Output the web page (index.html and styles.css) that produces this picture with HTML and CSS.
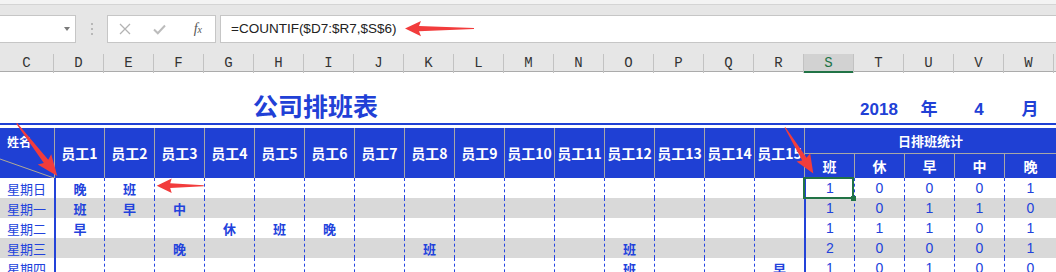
FILE: index.html
```html
<!DOCTYPE html>
<html lang="zh-CN">
<head>
    <meta charset="UTF-8">
    <meta name="viewport" content="width=device-width, initial-scale=1.0">
    <title>公司排班表</title>
    <link rel="stylesheet" href="styles.css">
</head>
<body>
    <div class="ribbon-edge"></div>

    <div class="formula-bar">
        <div class="name-box"><span class="drop"></span></div>
        <div class="grip"><i></i><i></i><i></i></div>
        <div class="fx-box">
            <span class="fx-btn">
                <svg width="12" height="12" viewBox="0 0 12 12"><path d="M1 1L11 11M11 1L1 11" stroke="#b3b3b3" stroke-width="1.3"/></svg>
            </span>
            <span class="fx-btn">
                <svg width="13" height="11" viewBox="0 0 13 11"><path d="M1 5.5L4.8 9.3L12 1.5" fill="none" stroke="#bcbcbc" stroke-width="2"/></svg>
            </span>
            <span class="fx-btn fx">f<sub>x</sub></span>
        </div>
        <div class="formula">=COUNTIF($D7:$R7,$S$6)</div>
    </div>

    <div class="col-heads">
        <div>C</div><div>D</div><div>E</div><div>F</div><div>G</div><div>H</div><div>I</div>
        <div>J</div><div>K</div><div>L</div><div>M</div><div>N</div><div>O</div><div>P</div>
        <div>Q</div><div>R</div><div class="active">S</div><div>T</div><div>U</div><div>V</div><div>W</div>
    </div>

    <div class="sheet">
        <div class="title-row">
            <div class="title">公司排班表</div>
            <div class="date first">2018</div>
            <div class="date">年</div>
            <div class="date">4</div>
            <div class="date">月</div>
        </div>
        <div class="rule"></div>

        <div class="head">
            <div class="corner">
                <span>姓名</span>
                <svg class="diag" width="54" height="50"><line x1="0" y1="31" x2="54" y2="50" stroke="#b4ab93" stroke-width="1"/></svg>
            </div>
            <div class="emp">员工1</div><div class="emp">员工2</div><div class="emp">员工3</div>
            <div class="emp">员工4</div><div class="emp">员工5</div><div class="emp">员工6</div>
            <div class="emp">员工7</div><div class="emp">员工8</div><div class="emp">员工9</div>
            <div class="emp">员工10</div><div class="emp">员工11</div><div class="emp">员工12</div>
            <div class="emp">员工13</div><div class="emp">员工14</div><div class="emp">员工15</div>
            <div class="stat-title">日排班统计</div>
            <div class="stat">班</div><div class="stat">休</div><div class="stat">早</div>
            <div class="stat">中</div><div class="stat">晚</div>
        </div>

        <div class="row">
            <div class="day">星期日</div>
            <div class="edge">晚</div><div>班</div><div></div><div></div><div></div><div></div><div></div><div></div>
            <div></div><div></div><div></div><div></div><div></div><div></div><div></div>
            <div class="edge n sel">1</div><div class="n">0</div><div class="n">0</div><div class="n">0</div><div class="n">1</div>
        </div>
        <div class="row alt">
            <div class="day">星期一</div>
            <div class="edge">班</div><div>早</div><div>中</div><div></div><div></div><div></div><div></div><div></div>
            <div></div><div></div><div></div><div></div><div></div><div></div><div></div>
            <div class="edge n">1</div><div class="n">0</div><div class="n">1</div><div class="n">1</div><div class="n">0</div>
        </div>
        <div class="row">
            <div class="day">星期二</div>
            <div class="edge">早</div><div></div><div></div><div>休</div><div>班</div><div>晚</div><div></div><div></div>
            <div></div><div></div><div></div><div></div><div></div><div></div><div></div>
            <div class="edge n">1</div><div class="n">1</div><div class="n">1</div><div class="n">0</div><div class="n">1</div>
        </div>
        <div class="row alt">
            <div class="day">星期三</div>
            <div class="edge"></div><div></div><div>晚</div><div></div><div></div><div></div><div></div><div>班</div>
            <div></div><div></div><div></div><div>班</div><div></div><div></div><div></div>
            <div class="edge n">2</div><div class="n">0</div><div class="n">0</div><div class="n">0</div><div class="n">1</div>
        </div>
        <div class="row">
            <div class="day">星期四</div>
            <div class="edge"></div><div></div><div></div><div></div><div></div><div></div><div></div><div></div>
            <div></div><div></div><div></div><div>班</div><div></div><div></div><div>早</div>
            <div class="edge n">1</div><div class="n">0</div><div class="n">1</div><div class="n">0</div><div class="n">0</div>
        </div>
    </div>

    <!-- red callout arrows drawn over the sheet -->
    <svg class="arrows" width="1056" height="272">
        <g fill="#f23c3c">
            <polygon transform="translate(405 28.6)" points="0,0 16,-7.6 14,-2.6 69,-0.5 69,0.5 14,2.6 16,7.6"/>
            <polygon transform="translate(156.7 185.7)" points="0,0 15,-7.2 13.5,-2.4 47,-0.5 47,0.5 13.5,2.4 15,7.2"/>
            <polygon transform="translate(57.3 176) rotate(-127.6)" points="0,0 21,-8.5 18.5,-2.8 66.5,-0.6 66.5,0.6 18.5,2.8 21,8.5"/>
            <polygon transform="translate(813.3 173.5) rotate(-121.6)" points="0,0 19,-8 17,-2.6 54,-0.5 54,0.5 17,2.6 19,8"/>
        </g>
    </svg>
</body>
</html>
```

FILE: styles.css
```css
body {
    margin: 0;
    width: 1056px;
    height: 272px;
    overflow: hidden;
    position: relative;
    background-color: #fff;
    font-family: "Noto Sans CJK SC", sans-serif;
}

/* excel chrome */
.ribbon-edge {
    height: 4px;
    background-color: #f3f3f3;
    border-bottom: 1px solid #d4d4d4;
}
.formula-bar {
    display: flex;
    align-items: flex-start;
    height: 49px;
    box-sizing: border-box;
    padding-top: 10px;
    background-color: #e6e6e6;
}
.name-box {
    width: 77px;
    height: 28px;
    margin-left: -1px;
    box-sizing: border-box;
    display: flex;
    align-items: center;
    justify-content: flex-end;
    padding-right: 5px;
    background-color: #fff;
    border: 1px solid #c6c6c6;
}
.drop {
    width: 0;
    height: 0;
    border-left: 3px solid transparent;
    border-right: 3px solid transparent;
    border-top: 4px solid #7a7a7a;
    margin-top: -1px;
}
.grip {
    width: 31px;
    height: 28px;
    display: flex;
    flex-direction: column;
    align-items: center;
    justify-content: center;
    gap: 3px;
}
.grip i {
    width: 2px;
    height: 2px;
    background-color: #b8b8b8;
}
.fx-box {
    width: 109px;
    height: 28px;
    box-sizing: border-box;
    display: flex;
    background-color: #fff;
    border: 1px solid #c6c6c6;
}
.fx-btn {
    flex: 1;
    display: flex;
    align-items: center;
    justify-content: center;
}
.fx {
    font-family: "Liberation Serif", serif;
    font-style: italic;
    font-size: 14px;
    color: #555;
    padding-left: 4px;
}
.fx sub {
    font-size: 10px;
    vertical-align: -1px;
}
.formula {
    flex: 1;
    height: 28px;
    box-sizing: border-box;
    margin-left: 4px;
    padding-left: 10px;
    background-color: #fff;
    border: 1px solid #c6c6c6;
    border-right: none;
    font-family: "Liberation Sans", Arial, sans-serif;
    font-size: 13.5px;
    line-height: 26px;
    color: #222;
}

.col-heads {
    display: grid;
    grid-template-columns: 54px repeat(20, 50px);
    height: 17px;
    background-color: #e6e6e6;
    border-bottom: 1px solid #ababab;
}
.col-heads div {
    border-right: 1px solid #c2c2c2;
    text-align: center;
    font-family: "Liberation Mono", monospace;
    font-size: 14px;
    line-height: 19px;
    color: #333;
}
.col-heads .active {
    background-color: #d2d2d2;
    color: #217346;
    box-shadow: inset 0 -2px #217346;
}

/* sheet */
.title-row,
.head,
.row {
    display: grid;
    grid-template-columns: 54px repeat(19, 50px) 1fr;
}
.title-row {
    height: 51px;
    align-items: end;
    color: #2140d6;
    font-weight: bold;
}
.title {
    grid-column: 5 / 12;
    padding-left: 49px;
    font-size: 25px;
    line-height: 30px;
    margin-bottom: 3px;
    white-space: nowrap;
}
.date {
    text-align: center;
    font-family: "Liberation Sans", "Noto Sans CJK SC", sans-serif;
    font-size: 17px;
    line-height: 20px;
    margin-bottom: 3px;
}
.date.first {
    grid-column-start: 18;
}
.rule {
    height: 2px;
    background-color: #1f40d4;
    margin-bottom: 3px;
}

.head {
    grid-template-rows: 26px 24px;
    background-color: #1f40d4;
    color: #fff;
    font-weight: bold;
}
.corner {
    grid-row: 1 / 3;
    position: relative;
    padding: 5px 0 0 7px;
    font-size: 12px;
}
.diag {
    position: absolute;
    left: 0;
    top: 0;
}
.emp {
    grid-row: 1 / 3;
    display: flex;
    align-items: center;
    justify-content: center;
    border-left: 1px solid #a7a7a7;
    font-size: 14px;
    white-space: nowrap;
}
.stat-title {
    grid-column: 17 / 22;
    grid-row: 1;
    display: flex;
    align-items: center;
    justify-content: center;
    border-left: 1px solid #a7a7a7;
    border-bottom: 1px solid #a7a7a7;
    font-size: 13px;
}
.stat {
    grid-row: 2;
    display: flex;
    align-items: center;
    justify-content: center;
    border-left: 1px solid #a7a7a7;
    font-size: 14px;
}

.row {
    height: 20px;
    color: #2242dc;
}
.row.alt {
    background-color: #d9d9d9;
}
.row div {
    display: flex;
    align-items: center;
    justify-content: center;
    border-left: 1px dashed #2645e2;
    font-size: 13px;
    font-weight: bold;
}
.row .day {
    border-left: none;
    justify-content: flex-start;
    padding-left: 7px;
    font-weight: normal;
}
.row .edge {
    border-left: 2px solid #2343d8;
}
.row .n {
    font-family: "Liberation Sans", Arial, sans-serif;
    font-size: 14px;
    font-weight: normal;
}
.sel {
    position: relative;
}
.sel::after {
    content: "";
    position: absolute;
    left: -3px;
    right: 0;
    top: -1px;
    bottom: -1px;
    border: 2px solid #217346;
}
.sel::before {
    content: "";
    position: absolute;
    right: -2px;
    bottom: -3px;
    width: 5px;
    height: 5px;
    background-color: #217346;
    z-index: 1;
}

.arrows {
    position: absolute;
    left: 0;
    top: 0;
    pointer-events: none;
}
```
